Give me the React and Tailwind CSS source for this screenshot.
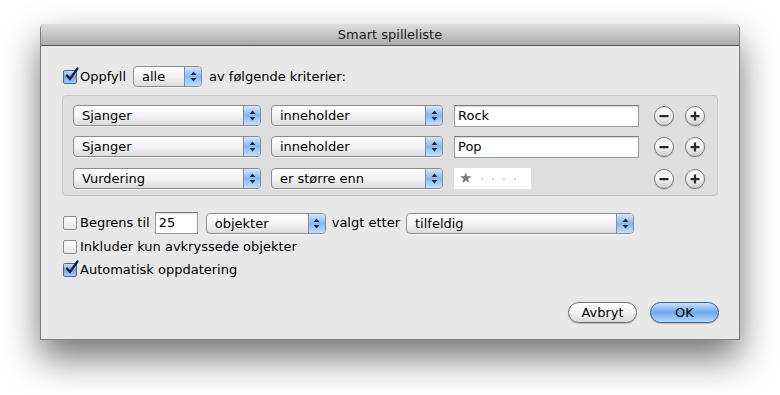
import React from "react";

const font = { fontFamily: '"DejaVu Sans", "Liberation Sans", sans-serif' };

// small aqua-style stepper arrows for popups
function Arrows() {
  return (
    <svg width="7" height="11" viewBox="0 0 7 11">
      <path d="M3.5 0.5 L6.5 4 L0.5 4 Z" fill="#1d2b44" />
      <path d="M3.5 10.5 L6.5 7 L0.5 7 Z" fill="#1d2b44" />
    </svg>
  );
}

function Popup({ label, width }) {
  return (
    <div
      className="flex h-[21px] items-stretch rounded-[4px] border border-[#8c8c8c] bg-gradient-to-b from-[#ffffff] via-[#f4f4f4] to-[#dcdcdc] shadow-[0_1px_0_rgba(255,255,255,0.6)]"
      style={{ width }}
    >
      <div className="flex flex-1 items-center pl-[8px] text-[13px] text-black leading-none">{label}</div>
      <div className="flex w-[17px] items-center justify-center rounded-r-[3px] border-l border-[#6f8fbf] bg-gradient-to-b from-[#d4e7fb] via-[#86b7ef] to-[#c2e0fc]">
        <Arrows />
      </div>
    </div>
  );
}

function Checkbox({ checked }) {
  return (
    <div
      className={
        "relative h-[14px] w-[14px] rounded-[2px] border " +
        (checked
          ? "border-[#4a6a9c] bg-gradient-to-b from-[#c2dcf8] via-[#6ea6e8] to-[#a8cdf5]"
          : "border-[#8d8d8d] bg-gradient-to-b from-[#ffffff] to-[#e4e4e4]")
      }
    >
      {checked && (
        <svg className="absolute left-[1px] top-[-4px]" width="14" height="15" viewBox="0 0 14 15">
          <path d="M2 8.5 L5 12 L12.5 1.5" fill="none" stroke="#142238" strokeWidth="2.3" strokeLinecap="round" />
        </svg>
      )}
    </div>
  );
}

function RoundBtn({ plus }) {
  return (
    <div className="flex h-[20px] w-[20px] items-center justify-center rounded-full border border-[#7a7a7a] bg-gradient-to-b from-[#ffffff] via-[#efefef] to-[#cfcfcf] shadow-[0_1px_1px_rgba(0,0,0,0.15)]">
      <svg width="10" height="10" viewBox="0 0 10 10">
        <rect x="0.5" y="4" width="9" height="2.2" fill="#2a2a2a" />
        {plus && <rect x="3.9" y="0.5" width="2.2" height="9" fill="#2a2a2a" />}
      </svg>
    </div>
  );
}

function Field({ value, width }) {
  return (
    <div
      className="flex h-[22px] items-center border border-[#9a9a9a] border-t-[#7a7a7a] bg-white pl-[3px] text-[13px] text-black shadow-[inset_0_1px_1px_rgba(0,0,0,0.15)]"
      style={{ width }}
    >
      {value}
    </div>
  );
}

function CriteriaRow({ field, op, value, stars }) {
  return (
    <div className="flex h-[21px] items-center">
      <Popup label={field} width={188} />
      <div className="w-[10px]" />
      <Popup label={op} width={172} />
      <div className="w-[11px]" />
      {stars ? (
        <div className="flex h-[21px] w-[77px] items-center gap-[9px] bg-white pl-[5px]">
          <span className="text-[15px] leading-none text-[#7d7d7d]">★</span>
          <span className="h-[2px] w-[2px] rounded-full bg-[#c4c4c4]" />
          <span className="h-[2px] w-[2px] rounded-full bg-[#c4c4c4]" />
          <span className="h-[2px] w-[2px] rounded-full bg-[#c4c4c4]" />
          <span className="h-[2px] w-[2px] rounded-full bg-[#c4c4c4]" />
        </div>
      ) : (
        <Field value={value} width={185} />
      )}
      <div className={stars ? "w-[123px]" : "w-[15px]"} />
      <RoundBtn />
      <div className="w-[11px]" />
      <RoundBtn plus />
    </div>
  );
}

export default function App() {
  return (
    <div className="h-[395px] w-[780px] overflow-hidden bg-white pl-[40px] pt-[24px]" style={font}>
      <div className="flex h-[316px] w-[700px] flex-col rounded-t-[5px] border-x border-b border-[#7d7d7d] bg-[#e8e8e8] shadow-[0_18px_36px_rgba(0,0,0,0.55)]">
        {/* title bar */}
        <div className="flex h-[22px] items-center justify-center rounded-t-[5px] border-b border-[#555] bg-gradient-to-b from-[#e0e0e0] to-[#ababab] text-[13px] text-[#1a1a1a]">
          Smart spilleliste
        </div>

        {/* match row */}
        <div className="mt-[20px] flex h-[21px] items-center pl-[22px] text-[13px] text-black">
          <Checkbox checked />
          <span className="ml-[3px]">Oppfyll</span>
          <div className="ml-[7px]">
            <Popup label="alle" width={69} />
          </div>
          <span className="ml-[7px]">av følgende kriterier:</span>
        </div>

        {/* criteria box */}
        <div className="ml-[21px] mt-[8px] h-[101px] w-[656px] rounded-[4px] border border-[#c6c6c6] bg-[#dedede] pl-[10px] pt-[9px]">
          <CriteriaRow field="Sjanger" op="inneholder" value="Rock" />
          <div className="h-[10px]" />
          <CriteriaRow field="Sjanger" op="inneholder" value="Pop" />
          <div className="h-[11px]" />
          <CriteriaRow field="Vurdering" op="er større enn" stars />
        </div>

        {/* limit row */}
        <div className="mt-[16px] flex h-[22px] items-center pl-[22px] text-[13px] text-black">
          <Checkbox />
          <span className="ml-[3px]">Begrens til</span>
          <div className="ml-[5px]">
            <Field value="25" width={43} />
          </div>
          <div className="ml-[8px]">
            <Popup label="objekter" width={120} />
          </div>
          <span className="ml-[6px]">valgt etter</span>
          <div className="ml-[6px]">
            <Popup label="tilfeldig" width={228} />
          </div>
        </div>

        <div className="mt-[2px] flex h-[21px] items-center pl-[22px] text-[13px] text-black">
          <Checkbox />
          <span className="ml-[3px]">Inkluder kun avkryssede objekter</span>
        </div>

        <div className="mt-[2px] flex h-[21px] items-center pl-[22px] text-[13px] text-black">
          <Checkbox checked />
          <span className="ml-[3px]">Automatisk oppdatering</span>
        </div>

        {/* buttons */}
        <div className="mt-[22px] flex justify-end gap-[13px] pr-[20px] text-[13px] text-black">
          <div className="flex h-[21px] w-[69px] items-center justify-center rounded-full border border-[#6b6b6b] bg-gradient-to-b from-[#ffffff] via-[#f2f2f2] to-[#d8d8d8] shadow-[0_1px_1px_rgba(0,0,0,0.2)]">
            Avbryt
          </div>
          <div className="flex h-[21px] w-[69px] items-center justify-center rounded-full border border-[#3e5f91] bg-gradient-to-b from-[#c9e0fa] via-[#6ea8ec] to-[#b5d7fa] shadow-[0_1px_1px_rgba(0,0,0,0.2)]">
            OK
          </div>
        </div>
      </div>
    </div>
  );
}
